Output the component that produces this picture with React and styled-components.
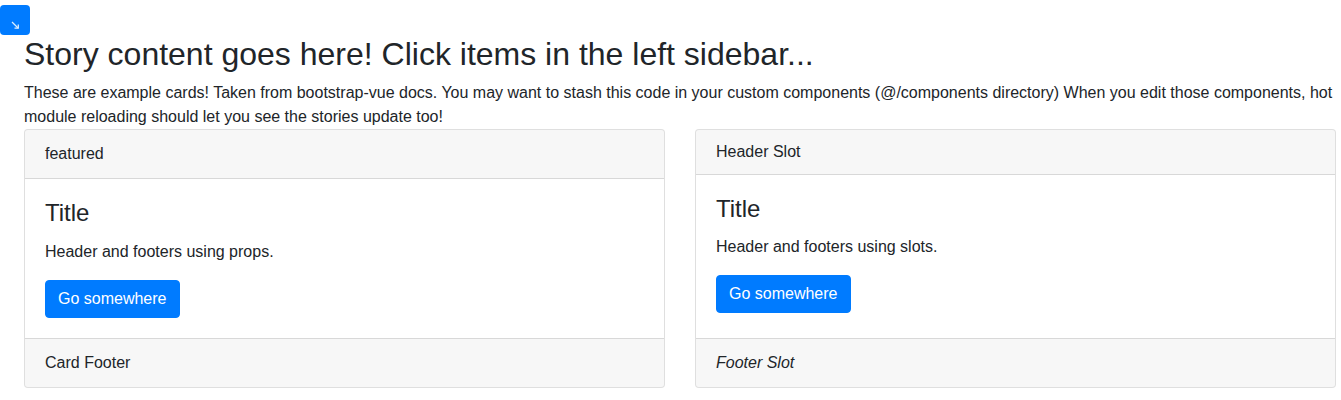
import React from "react";
import styled, { createGlobalStyle } from "styled-components";

const Global = createGlobalStyle`
  html, body { margin: 0; padding: 0; background: #fff; }
  body {
    font-family: "Liberation Sans", Arial, sans-serif;
    font-size: 16px;
    line-height: 1.5;
    color: #212529;
  }
  * { box-sizing: border-box; }
`;

const Page = styled.div`
  position: relative;
  padding: 35px 5px 12px 24px;
`;

const ToggleButton = styled.button`
  position: absolute;
  top: 5px;
  left: 0;
  width: 30px;
  height: 30px;
  padding: 0;
  border: none;
  border-radius: 4px;
  background: #007bff;
  display: flex;
  align-items: center;
  justify-content: center;
  cursor: pointer;
`;

const Heading = styled.h2`
  margin: 0 0 8px;
  font-size: 32px;
  font-weight: 500;
  line-height: 1.2;
  color: #212529;
`;

const Intro = styled.p`
  margin: 0;
`;

const Row = styled.div`
  display: flex;
  align-items: stretch;
  gap: 30px;
`;

const Card = styled.div`
  flex: 1 1 0;
  min-width: 0;
  display: flex;
  flex-direction: column;
  border: 1px solid rgba(0, 0, 0, 0.125);
  border-radius: 4px;
  background: #fff;
  overflow: hidden;
`;

const CardHeader = styled.div`
  padding: 12px 20px;
  background: rgba(0, 0, 0, 0.03);
  border-bottom: 1px solid rgba(0, 0, 0, 0.125);
  line-height: ${(p) => (p.$slot ? 1.2 : 1.5)};
`;

const CardBody = styled.div`
  flex: 1 1 auto;
  padding: 20px;
`;

const CardTitle = styled.h4`
  margin: 0 0 12px;
  font-size: 24px;
  font-weight: 500;
  line-height: 1.2;
`;

const CardText = styled.p`
  margin: 0 0 16px;
`;

const PrimaryButton = styled.a`
  display: inline-block;
  padding: 6px 12px;
  border: 1px solid #007bff;
  border-radius: 4px;
  background: #007bff;
  color: #fff;
  font-size: 16px;
  line-height: 1.5;
  text-decoration: none;
  cursor: pointer;
`;

const CardFooter = styled.div`
  padding: 12px 20px;
  background: rgba(0, 0, 0, 0.03);
  border-top: 1px solid rgba(0, 0, 0, 0.125);
  font-style: ${(p) => (p.$italic ? "italic" : "normal")};
`;

function ExampleCard({ header, slotHeader, text, footer, italicFooter }) {
  return (
    <Card>
      <CardHeader $slot={slotHeader}>{header}</CardHeader>
      <CardBody>
        <CardTitle>Title</CardTitle>
        <CardText>{text}</CardText>
        <PrimaryButton href="#">Go somewhere</PrimaryButton>
      </CardBody>
      <CardFooter $italic={italicFooter}>{footer}</CardFooter>
    </Card>
  );
}

export default function App() {
  return (
    <>
      <Global />
      <Page>
        <ToggleButton aria-label="toggle">
          <svg width="30" height="30" viewBox="0 0 30 30">
            <path d="M12 17 L18 23" stroke="#dbeeff" strokeWidth="1.3" fill="none" />
            <path d="M14.5 23.2 L18.3 23.2 L18.3 19.4" stroke="#dbeeff" strokeWidth="1.3" fill="none" />
          </svg>
        </ToggleButton>
        <Heading>Story content goes here! Click items in the left sidebar...</Heading>
        <Intro>
          These are example cards! Taken from bootstrap-vue docs. You may want to stash this code in your
          custom components (@/components directory) When you edit those components, hot module reloading
          should let you see the stories update too!
        </Intro>
        <Row>
          <ExampleCard
            header="featured"
            text="Header and footers using props."
            footer="Card Footer"
          />
          <ExampleCard
            header="Header Slot"
            slotHeader
            text="Header and footers using slots."
            footer="Footer Slot"
            italicFooter
          />
        </Row>
      </Page>
    </>
  );
}
